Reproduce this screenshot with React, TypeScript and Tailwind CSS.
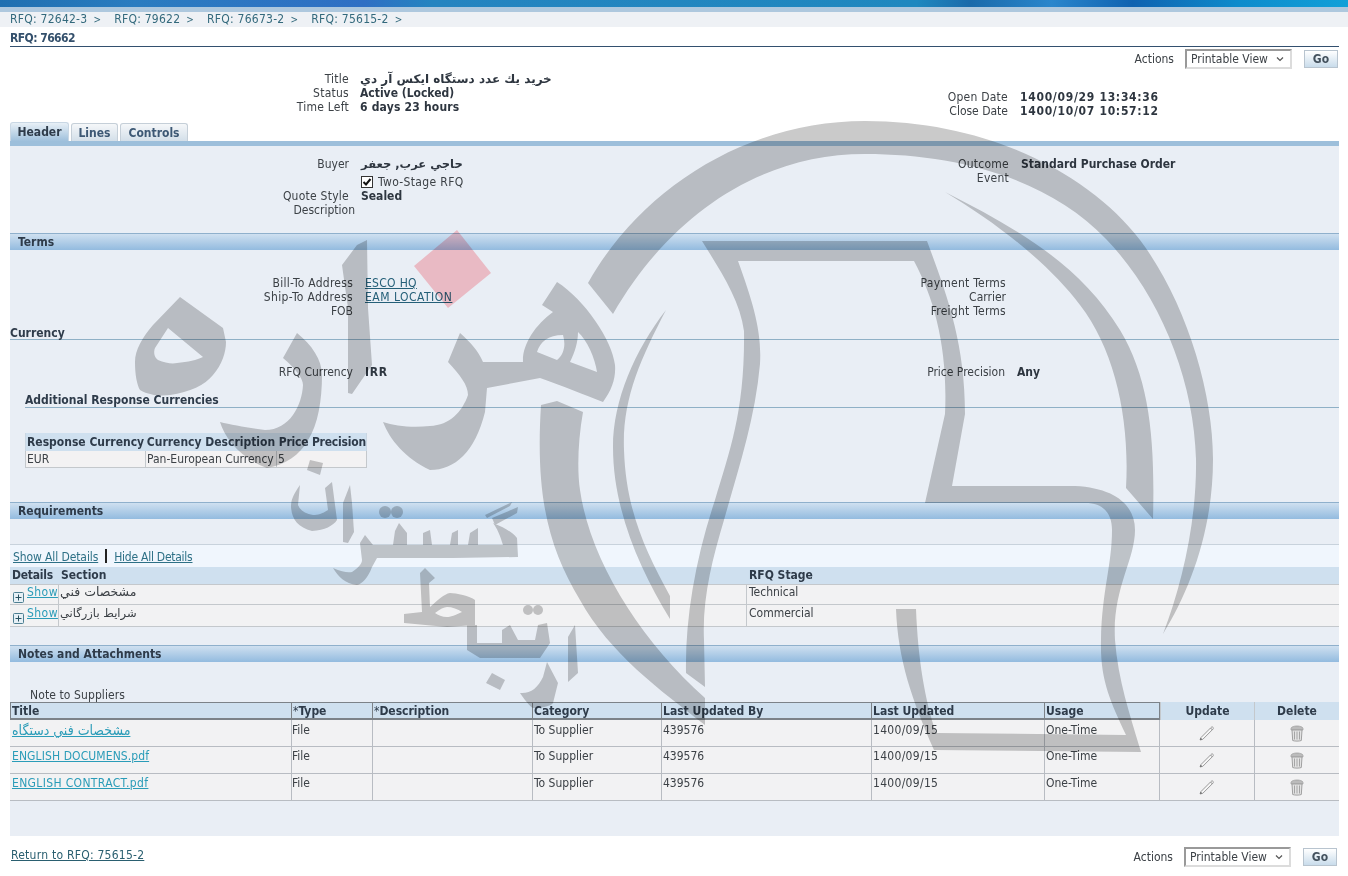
import type { ReactNode } from 'react'

const crumbs = ['RFQ: 72642-3', 'RFQ: 79622', 'RFQ: 76673-2', 'RFQ: 75615-2']

const attachments = [
  { title: 'مشخصات فني دستگاه', pad: 'pt-[3px]', linkClass: 'text-[14px]' },
  { title: 'ENGLISH DOCUMENS.pdf', pad: 'pt-[2px]', linkClass: 'tracking-[0.1px]' },
  { title: 'ENGLISH CONTRACT.pdf', pad: 'pt-[2px]', linkClass: 'tracking-[0.35px]' },
]

function Label({ children, tight, className = '' }: { children?: ReactNode; tight?: boolean; className?: string }) {
  return (
    <div className={`h-[14px] text-right leading-[14px] text-[#3c4146] ${tight ? '' : 'tracking-[0.25px]'} ${className}`}>
      {children}
    </div>
  )
}

function Value({ children, className = '' }: { children?: ReactNode; className?: string }) {
  return <div className={`h-[14px] leading-[14px] font-bold text-[#2e3640] ${className}`}>{children}</div>
}

function SectionBar({ title }: { title: string }) {
  return (
    <div className="h-[17px] border-t border-[#8fb0cc] bg-[linear-gradient(180deg,#cfe0f0,#93bbdf)] pl-[8px] text-[12px] leading-[16px] font-bold text-[#2e3b4a]">
      {title}
    </div>
  )
}

function ActionsBar() {
  return (
    <div className="flex items-center">
      <span className="mr-[11px] text-[#3c4146]">Actions</span>
      <div className="flex h-[20px] w-[107px] items-center justify-between border-2 border-t-[#999999] border-r-[#dcdcdc] border-b-[#dcdcdc] border-l-[#999999] bg-white pr-[6px] pl-[4px] text-[#3c4146]">
        <span>Printable View</span>
        <svg width="8" height="6" viewBox="0 0 8 6">
          <path d="M1 1.5 4 4.5 7 1.5" fill="none" stroke="#555" strokeWidth="1.2" />
        </svg>
      </div>
      <div className="ml-[12px] flex h-[18px] w-[34px] items-center justify-center border border-[#b8c4cf] bg-[linear-gradient(180deg,#ffffff,#c9dceb)] font-bold text-[#44525e]">
        Go
      </div>
    </div>
  )
}

function PlusIcon() {
  return (
    <svg width="11" height="11" viewBox="0 0 11 11" className="mt-[7px] ml-[3px] shrink-0">
      <rect x="0.5" y="0.5" width="10" height="10" rx="1" fill="#e6f0f6" stroke="#4d7f92" />
      <path d="M2.5 5.5h6M5.5 2.5v6" stroke="#27505f" />
    </svg>
  )
}

function PencilIcon() {
  return (
    <svg width="18" height="18" viewBox="0 0 18 18">
      <path d="M3 13.5 13 3.5c.8-.8 1.4-.8 2-.2s.5 1.2-.2 2L4.800 15.300 2 16z" fill="#f6f6f6" stroke="#9a9a9a" />
      <path d="M12.500 4 14.500 6" stroke="#8b8b8b" />
      <path d="M2 16l.7-2.300 1.600 1.600z" fill="#666" />
    </svg>
  )
}

function TrashIcon() {
  return (
    <svg width="14" height="17" viewBox="0 0 14 17">
      <path d="M1 3.500C1 2 4 1 7 1s6 1 6 2.500V5H1z" fill="#bbb" stroke="#9b9b9b" strokeWidth="0.7" />
      <path d="M2 5h10l-.7 10.500c-1.500.8-7.100.8-8.600 0z" fill="#e3e3e3" stroke="#a0a0a0" />
      <path d="M4.500 6.500v8M7 6.500v8M9.500 6.500v8" stroke="#a5a5a5" />
    </svg>
  )
}

// logo watermark over the page, coordinates are page pixels
function Watermark() {
  return (
    <svg
      className="pointer-events-none absolute top-0 left-0 z-10 mix-blend-multiply"
      width="1348"
      height="876"
      viewBox="0 0 1348 876"
    >
      <g fill="#cacaca">
        {/* outer ring */}
        <path d="M588 283C640 190 745 121 865 121C990 121 1090 175 1140 240C1185 300 1213 390 1213 459C1213 530 1190 590 1163 634C1182 585 1197 520 1196 459C1194 380 1160 295 1106 239C1050 180 960 154 865 154C760 154 670 215 613 314Z" />
        {/* thin second arc */}
        <path d="M945 192C1020 230 1080 265 1120 330C1150 380 1155 440 1153 519L1126 488C1130 420 1115 350 1080 305C1050 265 1000 225 945 192Z" />
        {/* head band */}
        <path d="M702 241H927C945 290 965 340 965 414L952 486H1075C1115 488 1135 505 1135 530C1135 560 1112 590 1115 640C1118 680 1130 715 1141 752L934 750C912 700 898 660 896 609L916 609C918 660 925 700 936 733L1126 735C1110 700 1100 680 1101 640C1102 590 1112 565 1112 530C1112 515 1105 503 1085 503H925L945 414C948 350 935 300 914 261H738C752 300 762 330 760 364C755 420 738 470 724 520C712 560 702 600 704 640L705 687L686 673C685 620 695 560 715 500C730 450 745 410 744 331C740 300 720 270 702 241Z" />
        {/* inner crescents */}
        <path d="M666 310C635 350 613 400 613 447C613 510 640 570 670 619V596C645 550 626 510 624 450C622 400 640 360 666 310Z" />
        <path d="M541 405L557 401L583 412C578 440 577 470 580 490C590 560 640 640 705 698L705 725C660 690 610 654 580 600C550 550 535 500 541 405Z" />
        {/* arabic lettering of the logo */}
        <path
          fillRule="evenodd"
          d="M557 282L542 305L553 312C535 325 522 345 523 362H483C478 350 470 342 460 333L448 362C460 375 468 385 468 395C462 412 450 425 430 426C412 428 395 426 383 422C390 440 405 458 430 470C455 470 475 452 485 412L487 388L540 378C560 385 585 395 603 402C612 390 616 378 615 365C612 340 585 300 557 282ZM537 352C540 342 548 335 563 335C566 345 564 355 557 360ZM578 332C587 340 595 358 597 372L570 362C575 352 578 342 578 332Z"
        />
        <path d="M367 240L357 245L342 265L348 308V393L352 394L372 365L368 308Z" />
        <path d="M297 333L283 358C295 368 303 378 303 385C302 405 290 430 265 430C250 428 232 425 220 422C225 438 240 458 267 468C285 465 300 455 308 440C318 425 322 400 322 375C322 360 312 345 297 333Z" />
        <path
          fillRule="evenodd"
          d="M180 297L153 325C142 338 135 350 135 362C135 375 137 385 140 390C150 396 162 396 170 395C190 392 205 385 213 375C222 365 226 352 226 342L223 328ZM168 328L155 348C153 353 155 358 158 360C165 363 172 364 177 363C188 362 197 360 203 357Z"
        />
        <path d="M310 460L323 463L320 475L307 470Z" />
        <path d="M300 485C293 495 291 500 291 507C292 520 298 527 312 531C325 530 333 526 337 520L332 482L325 488L328 510C322 514 318 515 313 515C305 514 300 510 298 505Z" />
        <path d="M350 485L343 503V542L348 543L354 532L352 503Z" />
        <circle cx="385" cy="512" r="6" />
        <circle cx="397" cy="512" r="6" />
        <path d="M360 543L365 535L373 545H393L395 531L399 523L407 533V545H423V533L430 530L432 545H450L452 533L458 530V545H468L470 533L478 528V545H503C500 535 497 528 493 523C505 528 512 532 517 538L518 557L453 558L377 558L372 567C368 578 362 584 357 585C345 584 338 576 333 568C342 572 348 573 352 572C358 568 362 564 362 560Z" />
        <path d="M485 515L512 502L510 506L487 518Z" />
        <path d="M492 518L518 507L517 513L495 525Z" />
        <path
          fillRule="evenodd"
          d="M420 573L425 568L435 578L429 583L430 607C438 600 444 594 450 593C456 593 470 596 475 600V625L447 627L404 623V614L422 612ZM435 613C440 609 444 607 447 607C452 607 458 609 462 612C456 615 450 617 447 617C442 617 438 615 435 613Z"
        />
        <path d="M467 625V650L480 658H540L550 643L547 623L538 625L535 640H518L510 625L502 630V643H477V625Z" />
        <circle cx="528" cy="610" r="5" />
        <circle cx="538" cy="610" r="5" />
        <path d="M575 625L568 637V682L578 673Z" />
        <path d="M547 662L543 677C538 688 530 694 520 693C526 702 532 708 533 708C545 708 552 705 553 703L558 683Z" />
        <path d="M492 673L505 680L500 690L486 683Z" />
      </g>
      <path d="M457 230L491 273L448 308L414 266Z" fill="#ffc8cc" />
    </svg>
  )
}

export default function App() {
  return (
    <div className="relative h-[876px] w-[1348px] overflow-hidden bg-white font-['DejaVu_Sans_Condensed','DejaVu_Sans',sans-serif] text-[12px] leading-[14px] text-[#3c4146]">
      {/* Top band */}
      <div className="h-[7px] bg-[linear-gradient(90deg,#1f6fb0_0%,#2a7cc0_10%,#2f6fc4_27%,#2584c0_32%,#1f88bf_68%,#1a6aaa_72%,#2a86cc_78%,#0f62b0_84%,#0e8ccc_92%,#12a0d8_100%)]" />
      <div className="h-[5px] bg-[#aec8de]" />

      {/* Breadcrumb */}
      <div className="flex h-[15px] items-center gap-[13px] bg-[#eef1f5] pl-[10px] leading-[14px] tracking-[0.25px] text-[#33697c]">
        {crumbs.map((crumb) => (
          <span key={crumb} className="whitespace-nowrap">
            {crumb}
            <span className="ml-[6px] text-[10px]">&gt;</span>
          </span>
        ))}
      </div>

      <div className="pr-[9px] pl-[10px]">
        {/* Page title */}
        <div className="h-[20px] border-b border-[#33506f] pt-[4px] font-bold tracking-[-0.55px] text-[#34506c]">RFQ: 76662</div>

        {/* Actions */}
        <div className="flex h-[25px] items-start justify-end pt-[2px] pr-[1px]">
          <ActionsBar />
        </div>

        {/* Summary */}
        <div className="flex h-[50px]">
          <div className="w-[339px]">
            <Label>Title</Label>
            <Label>Status</Label>
            <Label>Time Left</Label>
          </div>
          <div className="ml-[11px] w-[400px]">
            <Value className="font-['DejaVu_Sans',sans-serif]">خريد يك عدد دستگاه ايكس آر دي</Value>
            <Value>Active (Locked)</Value>
            <Value className="tracking-[0.2px]">6 days 23 hours</Value>
          </div>
          <div className="ml-[-152px] w-[400px] pt-[18px]">
            <Label>Open Date</Label>
            <Label tight>Close Date</Label>
          </div>
          <div className="ml-[12px] pt-[18px]">
            <Value className="tracking-[0.7px]">1400/09/29 13:34:36</Value>
            <Value className="tracking-[0.7px]">1400/10/07 10:57:12</Value>
          </div>
        </div>

        {/* Tabs */}
        <div className="flex h-[19px] items-end gap-[2px]">
          <div className="flex h-[19px] w-[59px] items-center justify-center rounded-t-[3px] border border-b-0 border-[#c9d7e4] bg-[linear-gradient(180deg,#e8f0f7,#9fc0dc)] font-bold text-[#2e3b4a]">
            Header
          </div>
          <div className="flex h-[18px] w-[47px] items-center justify-center rounded-t-[3px] border border-b-0 border-[#c5cfd8] bg-[linear-gradient(180deg,#f5f7f9,#d3dfe9)] font-bold text-[#3d5874]">
            Lines
          </div>
          <div className="flex h-[18px] w-[68px] items-center justify-center rounded-t-[3px] border border-b-0 border-[#c5cfd8] bg-[linear-gradient(180deg,#f5f7f9,#d3dfe9)] font-bold text-[#3d5874]">
            Controls
          </div>
        </div>
        <div className="h-[5px] bg-[#9dbfdb]" />

        {/* Panel */}
        <div className="h-[690px] bg-[#e9eef5]">
          {/* Header fields */}
          <div className="flex h-[87px] pt-[11px]">
            <div className="w-[339px]">
              <Label tight>Buyer</Label>
              <div className="h-[18px]" />
              <Label>Quote Style</Label>
              <Label tight className="w-[345px]">Description</Label>
            </div>
            <div className="ml-[12px] w-[400px]">
              <Value className="font-['DejaVu_Sans',sans-serif] text-[11.5px]">حاجي عرب, جعفر</Value>
              <div className="mt-[4px] flex h-[14px] items-center gap-[5px]">
                <span className="flex h-[12px] w-[12px] items-center justify-center border border-[#333] bg-white">
                  <svg width="10" height="10" viewBox="0 0 10 10">
                    <path d="M1.500 5 4 7.500 8.500 2" fill="none" stroke="#111" strokeWidth="2" />
                  </svg>
                </span>
                <span className="tracking-[0.35px]">Two-Stage RFQ</span>
              </div>
              <Value>Sealed</Value>
            </div>
            <div className="ml-[-152px] w-[400px]">
              <Label>Outcome</Label>
              <Label>Event</Label>
            </div>
            <div className="ml-[12px]">
              <Value>Standard Purchase Order</Value>
            </div>
          </div>

          <SectionBar title="Terms" />

          {/* Terms */}
          <div className="flex h-[76px] pt-[26px]">
            <div className="w-[343px]">
              <Label>Bill-To Address</Label>
              <Label className="tracking-[0.35px]">Ship-To Address</Label>
              <Label tight>FOB</Label>
            </div>
            <div className="ml-[12px] w-[400px] text-[#245f78] underline">
              <div className="h-[14px] tracking-[0.3px]">ESCO HQ</div>
              <div className="h-[14px] tracking-[0.5px]">EAM LOCATION</div>
            </div>
            <div className="ml-[-158px] w-[399px]">
              <Label>Payment Terms</Label>
              <Label tight>Carrier</Label>
              <Label>Freight Terms</Label>
            </div>
          </div>

          {/* Currency */}
          <div className="h-[13px] font-bold text-[#2e3b4a]">Currency</div>
          <div className="h-px bg-[#8fb0c6]" />
          <div className="flex h-[39px] items-end">
            <div className="w-[343px]">
              <Label tight>RFQ Currency</Label>
            </div>
            <div className="ml-[12px] w-[400px]">
              <Value className="tracking-[0.7px]">IRR</Value>
            </div>
            <div className="ml-[-158px] w-[398px]">
              <Label tight>Price Precision</Label>
            </div>
            <div className="ml-[12px]">
              <Value>Any</Value>
            </div>
          </div>

          <div className="mt-[14px] pl-[15px]">
            <div className="h-[14px] font-bold text-[#2e3b4a]">Additional Response Currencies</div>
            <div className="h-px bg-[#8fb0c6]" />

            {/* Response currencies */}
            <div className="mt-[25px] w-[342px]">
              <div className="flex h-[18px] border-x border-[#c9d6e2] bg-[#cfe0ef] leading-[18px] font-bold text-[#2e3b4a]">
                <div className="w-[120px] pl-[1px] whitespace-nowrap">Response Currency</div>
                <div className="w-[131px] pl-[1px] whitespace-nowrap">Currency Description</div>
                <div className="pl-[2px] tracking-[-0.2px] whitespace-nowrap">Price Precision</div>
              </div>
              <div className="flex h-[17px] border border-t-0 border-[#c4c8cc] bg-[#f3f2f3] leading-[17px]">
                <div className="w-[120px] border-r border-[#c4c8cc] pl-[1px]">EUR</div>
                <div className="w-[131px] border-r border-[#c4c8cc] pl-[1px] whitespace-nowrap">Pan-European Currency</div>
                <div className="pl-[1px]">5</div>
              </div>
            </div>
          </div>

          <div className="mt-[34px]">
            <SectionBar title="Requirements" />
          </div>

          {/* Requirements */}
          <div className="mt-[25px] flex h-[23px] items-end gap-[7px] border-t border-[#c8d2dc] bg-[#f0f6fd] pb-[3px] pl-[3px] text-[#2d7086] underline">
            <span className="tracking-[-0.1px]">Show All Details</span>
            <span className="mb-[1px] h-[14px] w-[2px] bg-[#222]" />
            <span className="tracking-[-0.25px]">Hide All Details</span>
          </div>
          <div className="flex h-[17px] bg-[#cfe0ef] leading-[16px] font-bold text-[#2e3b4a]">
            <div className="w-[49px] pl-[2px] tracking-[-0.25px]">Details</div>
            <div className="w-[688px] pl-[2px]">Section</div>
            <div className="pl-[2px]">RFQ Stage</div>
          </div>
          <div className="flex h-[21px] border-y border-[#c4c8cc] bg-[#f2f2f3]">
            <div className="flex w-[49px] border-r border-[#c4c8cc]">
              <PlusIcon />
              <span className="ml-[3px] tracking-[0.45px] text-[#2a9cb8] underline">Show</span>
            </div>
            <div className="w-[688px] border-r border-[#c4c8cc] pl-[1px] font-['DejaVu_Sans',sans-serif] text-[12.5px]">مشخصات فني</div>
            <div className="pl-[2px]">Technical</div>
          </div>
          <div className="flex h-[22px] border-b border-[#c4c8cc] bg-[#f2f2f3]">
            <div className="flex w-[49px] border-r border-[#c4c8cc] pt-[1px]">
              <PlusIcon />
              <span className="ml-[3px] tracking-[0.45px] text-[#2a9cb8] underline">Show</span>
            </div>
            <div className="w-[688px] border-r border-[#c4c8cc] pt-[1px] pl-[1px] font-['DejaVu_Sans',sans-serif] text-[11.5px]">شرايط بازرگاني</div>
            <div className="pt-[1px] pl-[2px]">Commercial</div>
          </div>

          <div className="mt-[18px]">
            <SectionBar title="Notes and Attachments" />
          </div>

          {/* Notes and attachments */}
          <div className="h-[40px] pt-[26px] pl-[20px] tracking-[0.1px]">Note to Suppliers</div>
          <div className="flex h-[18px] bg-[#cfe0ef] leading-[18px] font-bold text-[#2e3b4a]">
            <div className="flex w-[1150px] border border-b-2 border-[#7c8288] leading-[17px]">
              <div className="w-[280px] pl-[1px]">Title</div>
              <div className="w-[81px] border-l border-[#7c8288] pl-[1px]"><span className="font-normal">*</span>Type</div>
              <div className="w-[160px] border-l border-[#7c8288] pl-[1px]"><span className="font-normal">*</span>Description</div>
              <div className="w-[129px] border-l border-[#7c8288] pl-[1px]">Category</div>
              <div className="w-[210px] border-l border-[#7c8288] pl-[1px]">Last Updated By</div>
              <div className="w-[173px] border-l border-[#7c8288] pl-[1px]">Last Updated</div>
              <div className="border-l border-[#7c8288] pl-[1px]">Usage</div>
            </div>
            <div className="w-[94px] border-l border-[#c4c8cc] text-center">Update</div>
            <div className="w-[85px] border-l border-[#c4c8cc] text-center">Delete</div>
          </div>
          {attachments.map((row) => (
            <div key={row.title} className="flex h-[27px] border-b border-[#b8bcc2] bg-[#f2f2f3]">
              <div className={`w-[281px] pl-[2px] ${row.pad}`}>
                <span className={`text-[#2a9cb8] underline ${row.linkClass}`}>{row.title}</span>
              </div>
              <div className={`w-[81px] border-l border-[#b8bcc2] ${row.pad}`}>File</div>
              <div className="w-[160px] border-l border-[#b8bcc2]" />
              <div className={`w-[129px] border-l border-[#b8bcc2] pl-[1px] ${row.pad}`}>To Supplier</div>
              <div className={`w-[210px] border-l border-[#b8bcc2] pl-[1px] ${row.pad}`}>439576</div>
              <div className={`w-[173px] border-l border-[#b8bcc2] pl-[1px] tracking-[0.3px] ${row.pad}`}>1400/09/15</div>
              <div className={`w-[115px] border-l border-[#b8bcc2] pl-[1px] ${row.pad}`}>One-Time</div>
              <div className="flex w-[95px] items-center justify-center border-l border-[#b8bcc2]">
                <PencilIcon />
              </div>
              <div className="flex w-[85px] items-center justify-center border-l border-[#b8bcc2]">
                <TrashIcon />
              </div>
            </div>
          ))}
        </div>

        {/* Footer */}
        <div className="flex h-[40px] items-start justify-between pt-[11px]">
          <span className="pt-[1px] pl-[1px] tracking-[0.25px] text-[#2a5f70] underline">Return to RFQ: 75615-2</span>
          <div className="mr-[2px]">
            <ActionsBar />
          </div>
        </div>
      </div>

      <Watermark />
    </div>
  )
}
